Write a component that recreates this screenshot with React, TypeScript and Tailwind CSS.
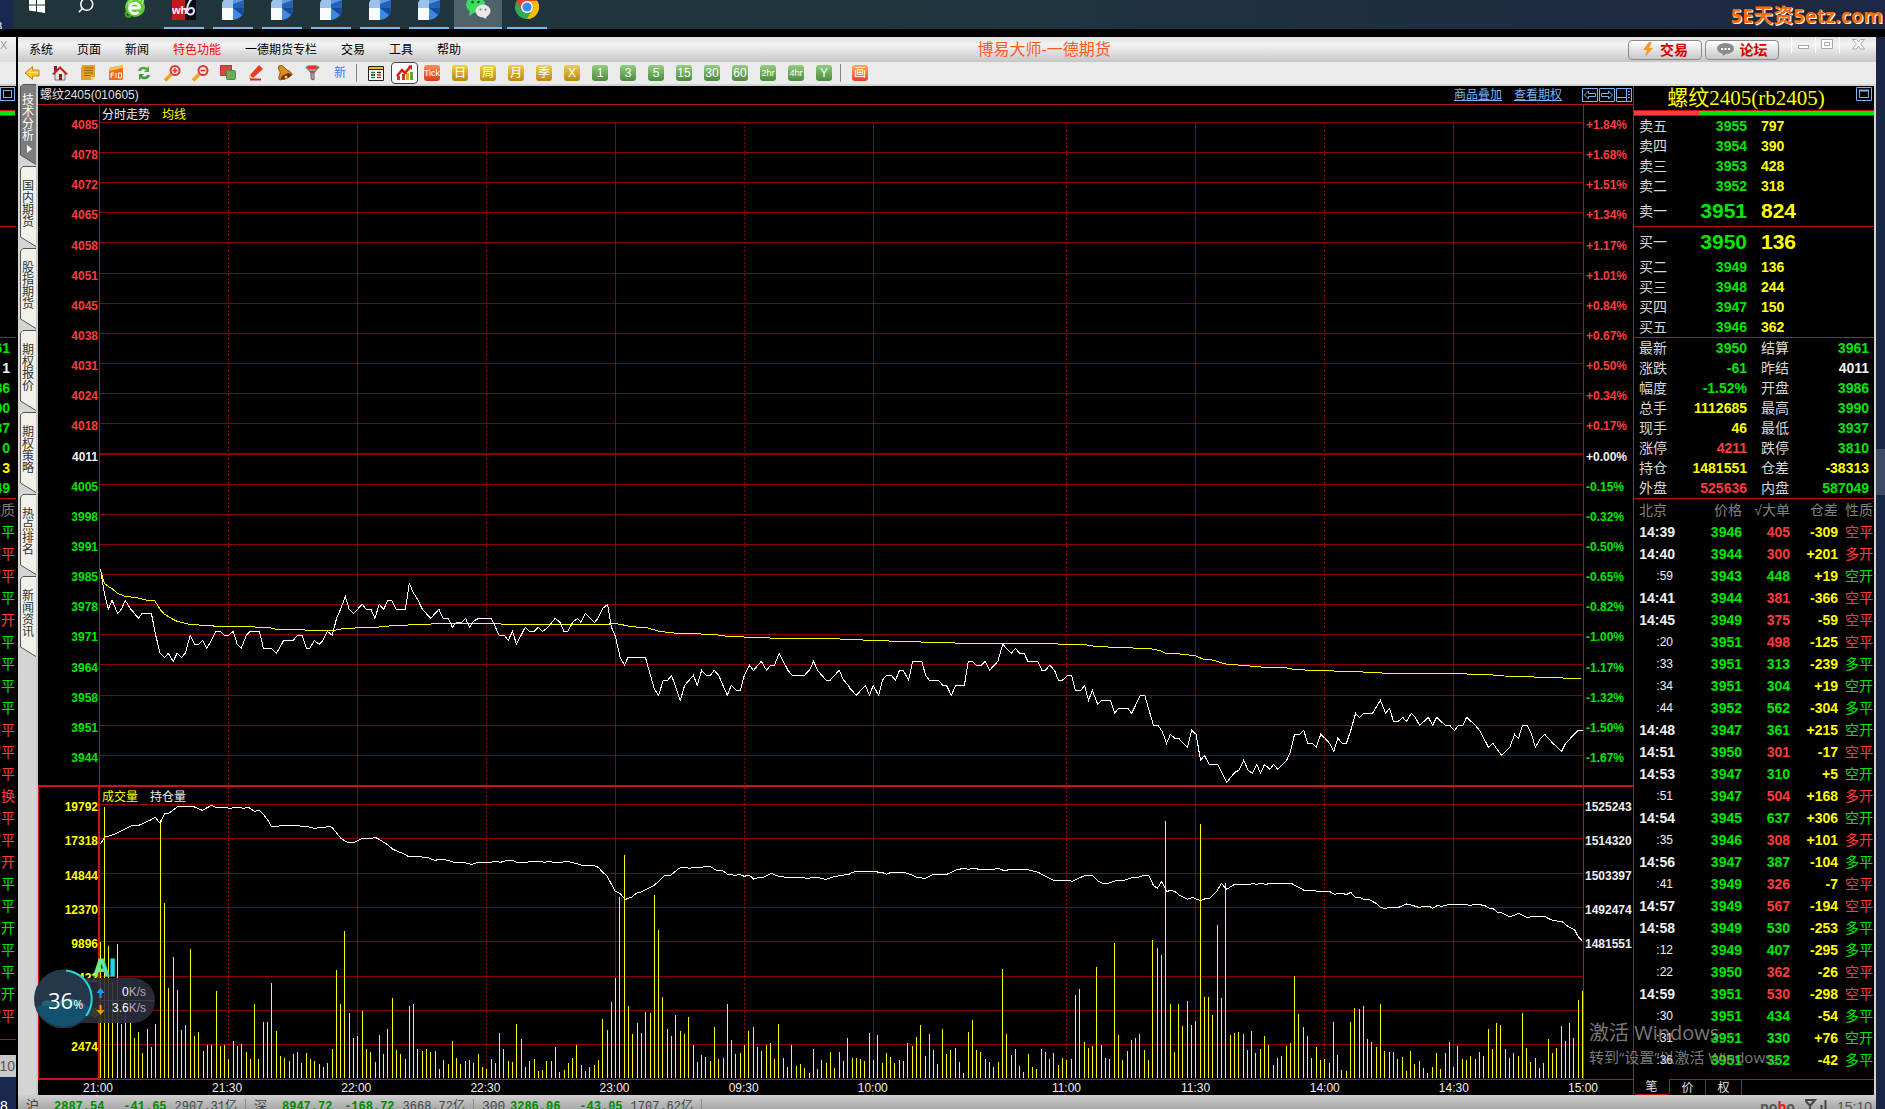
import type { ReactNode } from 'react';
import { Search } from 'lucide-react';
import clsx from 'clsx';

type Pt = [number, number];

// ── Chart geometry ──────────────────────────────────────────────────────────
// One trading minute is STEP units wide; 345 minutes from 21:00 to 15:00.
const X0 = 21;
const STEP = 8.864;
const DAY = 1568; // x where the second half of the line data starts

const TIME_TICKS = [
  { label: '21:00', minute: 0 },
  { label: '21:30', minute: 30 },
  { label: '22:00', minute: 60 },
  { label: '22:30', minute: 90 },
  { label: '23:00', minute: 120 },
  { label: '09:30', minute: 150 },
  { label: '10:00', minute: 180 },
  { label: '11:00', minute: 225 },
  { label: '11:30', minute: 255 },
  { label: '14:00', minute: 285 },
  { label: '14:30', minute: 315 },
  { label: '15:00', minute: 345 },
];
const DOTTED = [30, 90, 150, 225, 285];

const PRICE_LABELS = [
  4085, 4078, 4072, 4065, 4058, 4051, 4045, 4038, 4031, 4024, 4018,
  4011, 4005, 3998, 3991, 3985, 3978, 3971, 3964, 3958, 3951, 3944,
];
const PCT_LABELS = [
  '+1.84%', '+1.68%', '+1.51%', '+1.34%', '+1.17%', '+1.01%', '+0.84%', '+0.67%',
  '+0.50%', '+0.34%', '+0.17%', '+0.00%', '-0.15%', '-0.32%', '-0.50%', '-0.65%',
  '-0.82%', '-1.00%', '-1.17%', '-1.32%', '-1.50%', '-1.67%',
];
const VOL_LABELS = ['19792', '17318', '14844', '12370', '9896', '7422', '4948', '2474'];
const HOLD_LABELS = ['1525243', '1514320', '1503397', '1492474', '1481551', '', '', ''];

const PRICE_A: Pt[] = [[22,87],[30,160],[38,208],[46,181],[57,220],[65,208],[73,181],[83,205],[91,218],[100,235],[108,220],[127,220],[136,286],[145,340],[154,352],[162,340],[172,364],[180,340],[189,352],[197,340],[207,286],[216,313],[224,313],[233,301],[241,325],[251,301],[260,274],[269,274],[278,286],[286,286],[296,274],[304,313],[312,325],[323,286],[331,274],[350,274],[358,325],[375,325],[385,340],[400,301],[420,301],[428,286],[438,286],[447,325],[454,325],[463,301],[473,313],[481,301],[490,274],[500,286],[509,235],[518,205],[527,169],[535,208],[544,220],[562,193],[570,208],[580,208],[588,235],[597,193],[606,208],[615,181],[623,181],[632,208],[651,208],[659,130],[667,157],[676,178],[686,208],[703,235],[720,208],[729,235],[739,235],[748,262],[756,247],[767,247],[775,235],[783,262],[792,243],[802,235],[828,235],[836,259],[844,286],[855,286],[863,301],[872,274],[880,313],[898,262],[907,274],[917,274],[925,262],[934,274],[943,265],[960,235],[970,247],[978,274],[986,274],[996,247],[1006,235],[1013,247],[1022,220],[1041,247],[1048,235],[1058,205],[1068,193],[1076,262],[1084,289],[1094,352],[1103,376],[1110,352],[1146,352],[1164,445],[1173,466],[1183,421],[1192,421],[1200,406],[1218,481],[1227,436],[1245,406],[1253,436],[1262,391],[1272,406],[1280,406],[1288,391],[1297,406],[1315,466],[1323,436],[1334,451],[1342,451],[1350,406],[1361,376],[1369,391],[1385,364],[1396,391],[1404,376],[1412,376],[1422,340],[1440,391],[1449,406],[1474,406],[1484,391],[1493,364],[1501,391],[1519,421],[1527,421],[1536,406],[1546,391],[1554,418],[1568,443]];
const PRICE_B: Pt[] = [[0,265],[13,286],[32,256],[40,286],[48,256],[59,286],[67,241],[75,226],[85,226],[94,241],[102,211],[110,211],[121,241],[129,184],[148,184],[156,226],[164,241],[183,241],[191,256],[199,256],[209,286],[218,256],[236,256],[244,184],[253,184],[261,196],[271,196],[279,184],[288,211],[305,184],[315,133],[333,160],[341,145],[350,160],[359,160],[367,184],[387,184],[396,211],[403,211],[412,196],[422,211],[430,241],[438,241],[449,226],[457,226],[465,271],[476,271],[484,256],[492,301],[500,271],[511,313],[519,301],[537,301],[546,340],[554,325],[573,325],[581,340],[599,286],[608,286],[626,376],[635,376],[644,394],[653,430],[661,403],[670,415],[678,415],[696,442],[705,391],[714,403],[723,481],[731,466],[741,493],[758,493],[777,547],[794,517],[803,510],[812,481],[821,510],[830,520],[839,493],[847,520],[855,493],[866,508],[874,493],[882,508],[900,483],[908,458],[917,403],[927,403],[936,391],[944,430],[953,430],[962,442],[971,403],[980,415],[989,430],[998,454],[1006,415],[1016,430],[1024,430],[1033,391],[1043,340],[1051,352],[1060,340],[1078,340],[1094,301],[1105,340],[1113,325],[1121,364],[1131,364],[1140,352],[1148,364],[1158,340],[1166,352],[1175,376],[1193,352],[1202,376],[1210,352],[1228,376],[1237,376],[1247,391],[1255,376],[1264,376],[1272,352],[1290,376],[1300,394],[1317,442],[1326,430],[1344,466],[1361,442],[1371,403],[1379,415],[1387,376],[1397,376],[1405,400],[1414,442],[1423,418],[1433,403],[1450,430],[1468,454],[1476,430],[1502,391],[1512,391]];

const AVG_A: Pt[] = [[22,90],[30,130],[38,139],[46,146],[57,160],[73,169],[97,173],[115,180],[134,182],[145,208],[154,223],[172,238],[180,244],[205,253],[265,259],[325,260],[370,263],[385,268],[440,268],[445,271],[505,271],[525,265],[590,262],[625,257],[720,251],[845,250],[850,253],[1070,253],[1076,250],[1095,253],[1115,260],[1148,263],[1175,274],[1210,280],[1285,283],[1315,289],[1420,295],[1525,296],[1568,298]];
const AVG_B: Pt[] = [[0,118],[40,121],[100,124],[170,127],[240,130],[425,130],[430,133],[480,133],[505,139],[545,142],[620,146],[640,152],[652,160],[675,161],[712,167],[728,177],[745,179],[775,192],[825,198],[855,202],[895,202],[915,208],[950,211],[1045,215],[1110,220],[1235,221],[1310,223],[1350,228],[1410,231],[1470,234],[1508,237]];

const HOLD_A: Pt[] = [[22,178],[30,157],[50,148],[88,121],[101,121],[125,105],[135,97],[145,115],[154,87],[163,85],[180,66],[188,63],[211,63],[232,76],[251,61],[258,66],[278,66],[287,70],[305,67],[317,70],[327,67],[340,79],[350,76],[360,92],[368,107],[374,124],[388,124],[395,121],[410,123],[427,121],[438,124],[450,125],[464,130],[476,127],[485,127],[492,123],[500,128],[518,160],[530,171],[545,172],[563,160],[582,160],[588,156],[600,166],[615,180],[625,193],[650,208],[658,216],[666,214],[695,217],[712,226],[722,223],[740,226],[750,232],[770,232],[788,238],[800,232],[825,232],[837,229],[847,232],[860,226],[873,226],[880,232],[900,232],[912,229],[930,229],[938,232],[947,229],[958,233],[975,232],[980,229],[995,232],[1015,241],[1040,242],[1049,247],[1058,262],[1066,271],[1084,319],[1093,325],[1105,343],[1117,337],[1130,322],[1138,321],[1165,300],[1185,273],[1198,271],[1215,250],[1225,246],[1238,250],[1245,246],[1265,246],[1280,244],[1292,256],[1305,256],[1315,268],[1333,271],[1340,268],[1350,274],[1360,270],[1369,282],[1380,277],[1390,277],[1406,265],[1422,275],[1440,277],[1468,277],[1478,280],[1500,277],[1518,283],[1530,277],[1550,271],[1568,268]];
const HOLD_B: Pt[] = [[0,265],[12,259],[50,259],[60,262],[66,262],[75,268],[85,262],[112,262],[128,270],[138,277],[155,280],[172,268],[200,268],[220,254],[236,250],[244,253],[253,250],[268,253],[297,253],[306,250],[318,257],[332,253],[365,253],[388,262],[420,286],[452,286],[458,289],[485,271],[500,271],[512,289],[522,295],[532,295],[550,286],[565,286],[583,277],[597,276],[605,271],[616,271],[626,301],[634,310],[643,289],[653,320],[661,316],[670,319],[680,331],[696,343],[706,337],[723,347],[733,341],[742,340],[758,316],[766,295],[777,313],[793,298],[825,298],[830,295],[838,298],[848,295],[858,298],[868,295],[910,295],[937,316],[953,316],[965,319],[990,320],[999,328],[1010,325],[1025,328],[1033,322],[1042,337],[1052,337],[1060,343],[1070,343],[1085,355],[1094,367],[1104,371],[1112,367],[1132,367],[1148,357],[1160,361],[1175,368],[1182,364],[1195,364],[1202,370],[1212,361],[1220,364],[1236,358],[1265,358],[1280,361],[1292,358],[1308,361],[1320,370],[1327,371],[1335,382],[1343,382],[1355,392],[1362,395],[1380,385],[1397,398],[1410,394],[1433,394],[1445,404],[1470,411],[1480,423],[1495,435],[1502,455],[1510,467]];

// top of each one-minute volume bar, bars stand on VOL_BASE
const VOL_BASE = 879;
const VOLUME = [
  471,66,483,590,477,717,675,711,759,741,804,732,786,717,105,354,609,515,615,735,720,492,753,741,798,780,780,619,783,780,
  821,768,783,777,801,821,657,821,711,711,594,738,813,819,828,807,801,834,804,821,828,837,846,834,792,555,657,438,684,759,
  753,678,792,801,831,750,807,732,639,795,807,822,663,657,792,798,792,801,798,852,825,837,768,819,837,828,825,834,807,846,
  852,822,834,744,792,828,831,717,762,846,828,822,858,855,828,828,786,861,855,834,819,780,840,858,846,840,825,702,735,651,
  579,336,210,663,747,714,744,681,684,330,435,636,732,753,690,738,747,696,780,831,810,816,828,726,822,819,657,765,807,804,
  780,738,726,786,798,780,774,822,717,819,846,780,843,837,849,864,792,852,825,834,801,849,801,828,759,819,819,822,828,744,
  825,750,834,804,816,834,825,828,774,783,756,720,813,747,795,837,732,807,795,789,831,864,741,705,795,801,822,831,846,831,
  552,747,810,792,843,861,807,846,852,792,801,822,804,840,819,825,822,630,612,771,789,783,546,780,819,822,474,750,825,798,
  765,759,747,795,825,465,489,510,108,657,801,657,723,648,720,708,117,636,636,690,420,639,294,750,744,741,747,795,738,804,
  792,753,780,840,819,813,783,774,573,687,726,753,819,786,825,822,834,711,810,855,858,711,669,672,663,762,771,786,657,798,
  801,801,822,816,858,798,837,828,849,864,846,804,852,804,771,846,783,822,825,813,822,801,813,732,792,714,720,792,819,804,
  813,684,789,831,819,849,834,762,804,789,723,768,714,759,645,618,
];

const minuteX = (m: number) => X0 + m * STEP;
const join = (a: Pt[], b: Pt[], dy: number) =>
  [...a, ...b.map(([x, y]): Pt => [x + DAY, y + dy])].map(p => p.join(',')).join(' ');

// ── Quote panel data ────────────────────────────────────────────────────────
const ASKS = [['卖五', '3955', '797'], ['卖四', '3954', '390'], ['卖三', '3953', '428'], ['卖二', '3952', '318']];
const BIDS = [['买二', '3949', '136'], ['买三', '3948', '244'], ['买四', '3947', '150'], ['买五', '3946', '362']];

const G = 'text-[#00e600]';
const R = 'text-[#ff3c3c]';
const Y = 'text-[#ffff00]';
const W = 'text-[#f0f0f0]';

const STATS = [
  ['最新', '3950', G, '结算', '3961', G],
  ['涨跌', '-61', G, '昨结', '4011', W],
  ['幅度', '-1.52%', G, '开盘', '3986', G],
  ['总手', '1112685', Y, '最高', '3990', G],
  ['现手', '46', Y, '最低', '3937', G],
  ['涨停', '4211', R, '跌停', '3810', G],
  ['持仓', '1481551', Y, '仓差', '-38313', Y],
  ['外盘', '525636', R, '内盘', '587049', G],
];

const TRADES: [string, string, string, string, string, string][] = [
  ['14:39', '3946', '405', '-309', '空平', R],
  ['14:40', '3944', '300', '+201', '多开', R],
  [':59', '3943', '448', '+19', '空开', G],
  ['14:41', '3944', '381', '-366', '空平', R],
  ['14:45', '3949', '375', '-59', '空平', R],
  [':20', '3951', '498', '-125', '空平', R],
  [':33', '3951', '313', '-239', '多平', G],
  [':34', '3951', '304', '+19', '空开', G],
  [':44', '3952', '562', '-304', '多平', G],
  ['14:48', '3947', '361', '+215', '空开', G],
  ['14:51', '3950', '301', '-17', '空平', R],
  ['14:53', '3947', '310', '+5', '空开', G],
  [':51', '3947', '504', '+168', '多开', R],
  ['14:54', '3945', '637', '+306', '空开', G],
  [':35', '3946', '308', '+101', '多开', R],
  ['14:56', '3947', '387', '-104', '多平', G],
  [':41', '3949', '326', '-7', '空平', R],
  ['14:57', '3949', '567', '-194', '空平', R],
  ['14:58', '3949', '530', '-253', '多平', G],
  [':12', '3949', '407', '-295', '多平', G],
  [':22', '3950', '362', '-26', '空平', R],
  ['14:59', '3951', '530', '-298', '空平', R],
  [':30', '3951', '434', '-54', '多平', G],
  [':31', '3951', '330', '+76', '空开', G],
  [':36', '3951', '352', '-42', '多平', G],
];

const SIDE_TABS = ['技术分析', '国内期货', '股指期货', '期权报价', '期权策略', '热点排名', '新闻资讯'];
const MENU = ['系统', '页面', '新闻', '特色功能', '一德期货专栏', '交易', '工具', '帮助'];

export default function App() {
  return (
    <div className="flex h-screen flex-col overflow-hidden bg-black text-xs font-['Liberation_Sans','Noto_Sans_CJK_SC',sans-serif]">
      <Taskbar />
      <div className="h-2 shrink-0" />
      <div className="flex min-h-0 flex-1">
        <NeighbourWindow />
        <div className="ml-0.5 flex min-w-0 flex-1 flex-col bg-[#d4d4d4]">
          <TitleBar />
          <Toolbar />
          <div className="flex min-h-0 flex-1 pr-0.5">
            <SideTabs />
            <div className="mt-0.5 flex min-w-0 flex-1 bg-black">
              <ChartPanel />
              <QuotePanel />
            </div>
          </div>
          <StatusBar />
        </div>
        <div className="w-[9px] shrink-0 bg-[#1a2644] pt-[412px]">
          <div className="h-[46px] bg-[#3f4963]" />
        </div>
      </div>
    </div>
  );
}

// ── Desktop ─────────────────────────────────────────────────────────────────
function Taskbar() {
  return (
    <header className="relative flex h-[29px] shrink-0 overflow-hidden">
      <div className="w-[13px] shrink-0 overflow-hidden bg-[#1a2850] pt-5 text-white">
        <span className="block -ml-1 text-[11px] leading-3">8</span>
      </div>
      <div className="flex flex-1 gap-px bg-linear-to-r from-[#20353b] via-[#20343f] to-[#1d2844]">
        <TaskItem label="开始">
          <svg width="18" height="18" viewBox="0 0 18 18" className="-mt-1" fill="#fff">
            <path d="M1 3.4 8 2.4V8.5H1zM9 2.2 17 1V8.5H9zM1 9.5H8V15.6L1 14.6zM9 9.5H17V17L9 15.8z" />
          </svg>
        </TaskItem>
        <TaskItem label="搜索">
          <Search size={18} strokeWidth={2} className="-mt-1 -scale-x-100 text-white" />
        </TaskItem>
        <TaskItem label="浏览器">
          <svg width="22" height="24" viewBox="0 0 22 24" className="-mt-1">
            <circle cx="11" cy="11" r="10" fill="#5cc832" />
            <path d="M4 9A8 8 0 0 1 17 5M18 8l2-6" stroke="#b8f08c" strokeWidth="1.5" fill="none" />
            <path d="M5.5 12h11M16 12a5.2 5.2 0 1 0-1.5 4" stroke="#fff" strokeWidth="2.8" fill="none" />
            <path d="M2 16c-1 4 1 6 5 4" stroke="#43a51e" strokeWidth="2" fill="none" />
          </svg>
        </TaskItem>
        <TaskItem label="wh6" running>
          <svg width="24" height="24" viewBox="0 0 24 24" className="-mt-1">
            <rect width="13" height="24" fill="#c31a20" />
            <rect x="13" width="11" height="24" fill="#0b0b12" />
            <path d="M21 2c-4 3-6 8-6 13a3.500 3.500 0 1 0 7 0c0-4-5-4-6.500 0" stroke="#dbe6ff" strokeWidth="2" fill="none" />
            <text x="0" y="18" fontSize="11" fontWeight="700" fill="#fff">wh</text>
          </svg>
        </TaskItem>
        {[1, 2, 3, 4, 5].map(n => (
          <TaskItem key={n} label={`博易大师 ${n}`} running>
            <svg width="24" height="25" viewBox="0 0 24 25" className="-mt-1">
              <path d="M1 12V7C3 2 7 0 12 0V12z" fill="#9cc2ea" />
              <path d="M12 12V0h11v12z" fill="#2462b8" />
              <path d="M12 0h11v4L12 8z" fill="#5f9bdc" />
              <path d="M1 12h11v12H1z" fill="#f8fbff" />
              <path d="M12 12h11c0 7-4 11-11 12z" fill="#3c8be0" />
              <path d="M12 12h11c0 3-1 5-2 7z" fill="#164a9c" />
            </svg>
          </TaskItem>
        ))}
        <TaskItem label="微信" running active>
          <svg width="25" height="24" viewBox="0 0 25 24" className="-mt-1">
            <ellipse cx="9.500" cy="8.500" rx="9.500" ry="8" fill="#3ddb63" />
            <path d="M3 20l1-6 5 2z" fill="#3ddb63" />
            <circle cx="6.500" cy="6" r="1.300" fill="#15502a" />
            <circle cx="12.500" cy="6" r="1.300" fill="#15502a" />
            <ellipse cx="17" cy="15" rx="7.500" ry="6.500" fill="#e8e8e8" />
            <path d="M20 23l1-4-4 2z" fill="#e8e8e8" />
            <circle cx="14.500" cy="13.500" r="1" fill="#777" />
            <circle cx="19.500" cy="13.500" r="1" fill="#777" />
          </svg>
        </TaskItem>
        <TaskItem label="Chrome" running>
          <svg width="24" height="24" viewBox="0 0 24 24" className="-mt-1">
            <circle cx="12" cy="11" r="12" fill="#35a853" />
            <path d="M1.600 5A12 12 0 0 1 22.400 5H12a6 6 0 0 0-5.200 3z" fill="#e94235" />
            <path d="M22.400 5A12 12 0 0 1 12 23l5.200-9A6 6 0 0 0 12 5z" fill="#fbbc04" />
            <path d="M1.600 5 6.800 14A6 6 0 0 1 12 5z" fill="#e94235" />
            <circle cx="12" cy="11" r="6" fill="#fff" />
            <circle cx="12" cy="11" r="4.600" fill="#4285f4" />
          </svg>
        </TaskItem>
      </div>
      <div className="absolute top-0.5 right-0.5 text-xl leading-7 font-bold whitespace-nowrap text-[#ff6a00] [text-shadow:1px_1px_0_#fff] font-['Open_Sans','Noto_Sans_CJK_SC',sans-serif]">
        5E天资5etz.com
      </div>
    </header>
  );
}

function TaskItem({ label, running, active, children }: { label: string; running?: boolean; active?: boolean; children: ReactNode }) {
  return (
    <button
      type="button"
      aria-label={label}
      className={clsx('flex w-12 flex-col items-center justify-between', active && 'bg-[#50626a]')}
    >
      {children}
      {running && <span className={clsx('h-0.5 bg-[#76b9ed]', active ? 'w-12' : 'w-10')} />}
    </button>
  );
}

// right edge of the window that sits on the monitor to the left
function NeighbourWindow() {
  const stats = [['61', G], ['1', W], ['86', G], ['90', G], ['37', G], ['0', G], ['3', Y], ['49', G]];
  const tape = '平g 空平r 空平r 平g 开r 平g 平g 平g 平g 空平r 空平r 空平r 换r 空平r 空平r 开r 平g 平g 空开g 平g 平g 空开g 空平r'.split(' ');
  return (
    <div className="flex w-4 shrink-0 flex-col overflow-hidden bg-[#1a2850]">
      <div className="flex h-[25px] shrink-0 justify-start bg-linear-to-b from-[#f4f4f4] to-[#dcdcdc] text-[11px] leading-4 text-[#999]">X</div>
      <div className="h-[22px] shrink-0 bg-[#ebebeb]" />
      <div className="flex shrink-0 flex-col bg-black">
        <div className="h-0.5 bg-[#d0cccc]" />
        <div className="flex h-6 items-start pt-px">
          <span className="h-3.5 w-[15px] border border-[#78b4f0] p-0.5">
            <span className="block h-2 w-[9px] border border-[#78b4f0]" />
          </span>
        </div>
        <div className="h-1.5 w-[15px] border-y border-[#c81414] bg-[#00e600]" />
        <div className="h-[110px]" />
        <div className="h-px bg-[#c01414]" />
        <div className="h-[110px]" />
        <div className="h-px bg-[#c01414]" />
        {stats.map(([t, c], i) => (
          <div key={i} className={clsx('flex h-5 items-center justify-end pr-1.5 text-sm font-bold', c)}>{t}</div>
        ))}
        <div className="h-px bg-[#c01414]" />
        <div className="flex h-[22px] items-center justify-end pr-px text-sm whitespace-nowrap text-[#808080]">性质</div>
        {tape.map((t, i) => (
          <div key={i} className={clsx('flex h-[22px] items-center justify-end pr-px text-sm whitespace-nowrap', t.endsWith('r') ? R : G)}>
            {t.slice(0, -1)}
          </div>
        ))}
        <div className="mt-3 mb-[15px] h-px bg-[#c01414]" />
      </div>
      <div className="flex h-[22px] shrink-0 items-center justify-end bg-[#c8c8c8] pr-px text-sm text-[#555]">10</div>
      <div className="pt-[21px] text-sm leading-4 text-white">8</div>
    </div>
  );
}

// ── Window chrome ───────────────────────────────────────────────────────────
function TitleBar() {
  return (
    <div className="relative flex h-[25px] shrink-0 items-center bg-linear-to-b from-[#e2e2e2] via-[#f3f3f3] via-30% to-[#c6c6c6] text-black">
      <nav className="flex gap-6 pl-[11px]">
        {MENU.map(m => (
          <a key={m} href="#" className={clsx('leading-4 whitespace-nowrap', m === '特色功能' && 'text-[#ff0000]')}>{m}</a>
        ))}
      </nav>
      {/* centred between the menu and the buttons */}
      <h1 className="flex-1 pr-px text-center text-base leading-6 text-[#ff5a1e]">博易大师-一德期货</h1>
      <div className="flex items-center gap-[3px] pr-3">
        <button type="button" className="flex h-5 w-[74px] items-center justify-center gap-1.5 rounded-sm border border-[#8a8a8a] bg-linear-to-b from-white to-[#c8c8c8] text-sm font-bold text-[#d40000]">
          <svg width="12" height="15" viewBox="0 0 12 15"><path d="M7 0 1 8h4L3 15l8-9H7l3-6z" fill="#f29a1f" /></svg>
          交易
        </button>
        <button type="button" className="flex h-5 w-[74px] items-center justify-center gap-1.5 rounded-sm border border-[#8a8a8a] bg-linear-to-b from-white to-[#c8c8c8] text-sm font-bold text-[#d40000]">
          <svg width="17" height="13" viewBox="0 0 17 13">
            <ellipse cx="8.500" cy="5.500" rx="8.500" ry="5.500" fill="#8c8c8c" />
            <path d="M5 9l1 4 4-3z" fill="#8c8c8c" />
            <path d="M4 5h2v2H4zM7.500 5h2v2h-2zM11 5h2v2h-2z" fill="#fff" />
          </svg>
          论坛
        </button>
      </div>
      <div className="flex h-4 items-stretch self-start border-l border-white">
        <button type="button" aria-label="最小化" className="flex w-6 items-start justify-center border-r border-white">
          <svg width="12" height="14" viewBox="0 0 12 14"><rect x=".5" y="8.500" width="10" height="3" fill="#fff" stroke="#a8a8a8" /></svg>
        </button>
        <button type="button" aria-label="最大化" className="flex w-6 items-start justify-center border-r border-white">
          <svg width="13" height="14" viewBox="0 0 13 14"><path d="M.5 2.500h11v9H.5zM3.500 5.500h5v3h-5z" fill="#fff" stroke="#a8a8a8" /></svg>
        </button>
        <button type="button" aria-label="关闭" className="flex w-9 items-start justify-center">
          <svg width="13" height="14" viewBox="0 0 13 14"><path d="M.5 2.500h4l2 2.500 2-2.500h4L8.500 7l4 5h-4l-2-3-2 3h-4l4-5z" fill="#fff" stroke="#a8a8a8" /></svg>
        </button>
      </div>
    </div>
  );
}

const GOLD_KEYS = ['日', '周', '月', '季', 'X'];
const GREEN_KEYS = ['1', '3', '5', '15', '30', '60', '2hr', '4hr', 'Y'];

function Tool({ label, children }: { label: string; children: ReactNode }) {
  return (
    <button type="button" aria-label={label} className="flex h-[22px] w-7 shrink-0 items-center justify-center">
      {children}
    </button>
  );
}

const keyBase = 'flex h-4 w-4 items-center justify-center rounded-[3px] text-xs leading-4 text-white';

function Toolbar() {
  return (
    <div className="flex h-[22px] shrink-0 items-center bg-[#ebebeb]">
      <Tool label="后退">
        <svg width="16" height="16" viewBox="0 0 16 16"><path d="M8.500 1.500 1 8l7.500 6.500V11H15V5H8.500z" fill="#fdc52a" stroke="#c98a12" /><path d="M8 4 4 7.500h10" stroke="#ffe68a" fill="none" /></svg>
      </Tool>
      <Tool label="首页">
        <svg width="16" height="16" viewBox="0 0 16 16"><path d="M3 8v7h10V8" fill="#e9e3e0" stroke="#777" /><path d="M0 9 8 1l8 8-2 1-6-6-6 6z" fill="#c9202a" /><path d="M2 1h3v4L2 7z" fill="#8e1c20" /><path d="M7 9h3v6H7z" fill="#8e1c20" /></svg>
      </Tool>
      <Tool label="资讯">
        <svg width="16" height="16" viewBox="0 0 16 16"><path d="M2 0h13v12l-3 3H1V3z" fill="#e3a02c" /><path d="M4 3h9M4 5.500h9M4 8h9M4 10.500h6" stroke="#9a6410" /><path d="M11 15v-3h4z" fill="#fbdc8c" /></svg>
      </Tool>
      <Tool label="F10">
        <svg width="16" height="16" viewBox="0 0 16 16"><path d="M1 3 15 0v14l-1 1H1z" fill="#f06a1c" /><path d="M1 3 15 0v3L1 6z" fill="#f9c04a" /><path d="M3 13V8h3M3 10h2.500M8 8v5M10.500 8h3v5h-3z" stroke="#fff" fill="none" /></svg>
      </Tool>
      <Tool label="刷新">
        <svg width="14" height="16" viewBox="0 0 14 16"><path d="M1 6c1-5 7-5 9-3l2-2v6H7l2-2c-2-1-4-1-5 1z" fill="#4caf3c" /><path d="M13 10c-1 5-7 5-9 3l-2 2V9h5l-2 2c2 1 4 1 5-1z" fill="#3f9a30" /></svg>
      </Tool>
      <Tool label="放大">
        <svg width="17" height="17" viewBox="0 0 17 17"><path d="M1 15.500 7 9.500" stroke="#f5a21b" strokeWidth="3.500" /><circle cx="11" cy="5.500" r="4.500" fill="#ffe3df" stroke="#df3a30" strokeWidth="2" /><path d="M8.500 5.500h5M11 3v5" stroke="#df3a30" strokeWidth="1.500" /></svg>
      </Tool>
      <Tool label="缩小">
        <svg width="17" height="17" viewBox="0 0 17 17"><path d="M1 15.500 7 9.500" stroke="#f5a21b" strokeWidth="3.500" /><circle cx="11" cy="5.500" r="4.500" fill="#ffe3df" stroke="#df3a30" strokeWidth="2" /><path d="M8.500 5.500h5" stroke="#df3a30" strokeWidth="1.500" /></svg>
      </Tool>
      <Tool label="叠加">
        <svg width="17" height="16" viewBox="0 0 17 16"><rect x=".5" y=".5" width="11" height="10" fill="#d8463f" stroke="#b83a34" /><rect x="6.500" y="5.500" width="9" height="9" rx="1" fill="#68ab58" stroke="#4f8e42" /></svg>
      </Tool>
      <Tool label="画线">
        <svg width="16" height="16" viewBox="0 0 16 16"><path d="M2 10 11 0l4 4-10 9-4 1z" fill="#ea3e22" /><path d="M2 10l3 3-4 1z" fill="#f8d28a" /><path d="M2 14.500h11" stroke="#d8301c" strokeWidth="2" /></svg>
      </Tool>
      <Tool label="预警">
        <svg width="17" height="16" viewBox="0 0 17 16"><path d="M3 1c4-2 5 2 8 4 3 1 5 3 5 5L4 15c-2-1-1-3 0-6S1 4 3 1z" fill="#dd8e23" stroke="#8b4d0d" /><ellipse cx="10" cy="11.500" rx="5.500" ry="2.500" transform="rotate(-24 10 11.500)" fill="#6e340a" /><circle cx="10" cy="12" r="1.500" fill="#ffd35c" /></svg>
      </Tool>
      <Tool label="筛选">
        <svg width="15" height="16" viewBox="0 0 15 16"><path d="M1 2h13L9 8v7l-3-1V8z" fill="#a9a9a9" stroke="#666" /><ellipse cx="7.500" cy="2.500" rx="6.500" ry="2.200" fill="#e8322c" stroke="#999" /><path d="M5 6h5L7.500 9z" fill="#e8322c" /></svg>
      </Tool>
      <Tool label="新"><span className="text-xs leading-4 text-[#2a86e8]">新</span></Tool>
      <div className="h-[18px] w-2 pl-0.5"><div className="h-full w-px bg-[#888]" /></div>
      <Tool label="报价">
        <svg width="16" height="16" viewBox="0 0 16 16"><path d="M.5 1.500h15v14H.5z" fill="#fff" stroke="#222" /><path d="M1 3h14" stroke="#eec21e" strokeWidth="2" /><path d="M1 4.500h14" stroke="#222" /><path d="M3 7.500h4M3 12.500h4" stroke="#198a32" strokeWidth="1.500" /><path d="M9 7.500h4M3 10h4" stroke="#222" strokeWidth="1.500" /><path d="M9 10h4M9 12.500h4" stroke="#d22" strokeWidth="1.500" /></svg>
      </Tool>
      <Tool label="分时走势">
        <span className="flex h-[22px] w-[27px] items-center justify-center rounded border border-[#444] bg-white">
          <svg width="17" height="16" viewBox="0 0 17 16"><path d="M1 15v-4h3v4zM6 15v-6h3v6z" fill="#b8452c" /><path d="M10 15V8h3v7z" fill="#e6a72c" /><path d="M14 15V7h3v8z" fill="#5aa83e" /><path d="M1 11 6 5l3 3 6-7" stroke="#e01515" strokeWidth="2.500" fill="none" /><path d="M16 0v5l-4-4z" fill="#e01515" /></svg>
        </span>
      </Tool>
      <Tool label="Tick"><span className={clsx(keyBase, 'bg-linear-to-b from-[#ff8a50] to-[#d93a22] text-[9px]')}>Tick</span></Tool>
      {GOLD_KEYS.map(k => (
        <Tool key={k} label={k}><span className={clsx(keyBase, 'bg-linear-to-b from-[#efcf4c] to-[#b98a12]')}>{k}</span></Tool>
      ))}
      {GREEN_KEYS.map(k => (
        <Tool key={k} label={k}>
          <span className={clsx(keyBase, 'bg-linear-to-b from-[#93cf7c] to-[#4b8c3f]', k.length > 2 && 'text-[9px]')}>{k}</span>
        </Tool>
      ))}
      <div className="h-[18px] w-2 pl-0.5"><div className="h-full w-px bg-[#888]" /></div>
      <Tool label="画"><span className={clsx(keyBase, 'bg-linear-to-b from-[#ffb04a] to-[#ea3c1c]')}>画</span></Tool>
    </div>
  );
}

function SideTabs() {
  return (
    <div className="flex w-5 shrink-0 flex-col gap-px border-r-2 border-[#cbc7c7] bg-[#d4d4d4] pl-0.5">
      {SIDE_TABS.map((t, i) => (
        <button key={t} type="button" className={clsx('relative h-[81px] w-4 shrink-0', i === 0 ? 'text-white' : 'text-[#333]')}>
          <svg className="absolute inset-0" width="16" height="81" viewBox="0 0 16 81">
            <path d="M16 .5H3L.5 3V71L16 80.500" fill={i === 0 ? '#7d7d7d' : '#f1f1ea'} stroke="#555" />
          </svg>
          <span className={clsx('absolute inset-x-0 flex flex-col items-center text-xs leading-3', i === 0 ? 'top-2.5' : 'top-3.5')}>
            {t.split('').map(c => <span key={c}>{c}</span>)}
          </span>
          {i === 0 && (
            <svg className="absolute top-[61px] left-1.5" width="6" height="8" viewBox="0 0 6 8"><path d="M1 0v8l5-4z" fill="#fff" /></svg>
          )}
        </button>
      ))}
    </div>
  );
}

// ── Charts ──────────────────────────────────────────────────────────────────
function VerticalGrid({ top, bottom }: { top: number; bottom: number }) {
  return (
    <>
      {TIME_TICKS.slice(1, -1).map(({ minute }) => (
        <line
          key={minute}
          x1={minuteX(minute)} x2={minuteX(minute)} y1={top} y2={bottom}
          stroke="#8c0000"
          strokeDasharray={DOTTED.includes(minute) ? '2 2' : undefined}
          vectorEffect="non-scaling-stroke"
        />
      ))}
    </>
  );
}

function ChartPanel() {
  return (
    <section className="relative flex min-w-0 flex-1 flex-col">
      <div className="flex h-[18px] shrink-0 items-center pl-0.5 text-[#e0e0e0]">
        <span className="leading-4">螺纹2405(010605)</span>
        <div className="ml-auto flex items-center gap-3 text-[#78b4f0]">
          <a href="#" className="leading-4 underline">商品叠加</a>
          <a href="#" className="leading-4 underline">查看期权</a>
        </div>
        <div className="ml-5 flex gap-px pr-px text-[#78b4f0]">
          <button type="button" aria-label="左移">
            <svg width="16" height="14" viewBox="0 0 16 14" fill="none" stroke="currentColor"><path d="M.5.5h15v13H.5zM2.500 7 6.500 3v2.500h7v3h-7V11z" /></svg>
          </button>
          <button type="button" aria-label="右移">
            <svg width="16" height="14" viewBox="0 0 16 14" fill="none" stroke="currentColor"><path d="M.5.5h15v13H.5zM13.500 7l-4-4v2.500h-7v3h7V11z" /></svg>
          </button>
          <button type="button" aria-label="布局">
            <svg width="16" height="14" viewBox="0 0 16 14" fill="none" stroke="currentColor"><path d="M.5.5h15v13H.5zM10.500 0v14M0 9.500h10M12 3.500h2M12 6.500h2M12 9.500h2" /></svg>
          </button>
        </div>
      </div>

      {/* price */}
      <div className="flex min-h-0 flex-1 border-t border-[#c01414] font-bold">
        <div className="flex w-[61px] shrink-0 flex-col justify-between pt-3.5 pr-px pb-[21px] text-right">
          {PRICE_LABELS.map(p => (
            <span key={p} className={clsx('leading-3', p > 4011 ? R : p < 4011 ? G : W)}>{p}</span>
          ))}
        </div>
        <div className="relative min-w-0 flex-1 border-x border-[#c01414]">
          <svg className="absolute inset-0 h-full w-full" viewBox="21 -1305 3059 2040" preserveAspectRatio="none" shapeRendering="crispEdges" fill="none">
            {PRICE_LABELS.map((p, i) => (
              <line
                key={p}
                x1="20" x2="3081" y1={-1253 + i * 90.43} y2={-1253 + i * 90.43}
                stroke="#8c0000" strokeWidth={p === 4011 ? 2 : 1} vectorEffect="non-scaling-stroke"
              />
            ))}
            <VerticalGrid top={-1253} bottom={735} />
            <polyline points={join(AVG_A, AVG_B, 180)} stroke="#ffff00" vectorEffect="non-scaling-stroke" />
            <polyline points={join(PRICE_A, PRICE_B, 180)} stroke="#ffffff" vectorEffect="non-scaling-stroke" />
          </svg>
          <div className="relative flex gap-3 pt-0.5 pl-0.5 font-normal leading-4">
            <span className="text-[#f0f0f0]">分时走势</span>
            <span className="text-[#ffff00]">均线</span>
          </div>
        </div>
        <div className="flex w-[49px] shrink-0 flex-col justify-between pt-3.5 pb-[21px] pl-0.5">
          {PCT_LABELS.map((p, i) => (
            <span key={p} className={clsx('leading-3', i < 11 ? R : i > 11 ? G : W)}>{p}</span>
          ))}
        </div>
      </div>

      {/* volume / open interest */}
      <div className="flex h-[295px] shrink-0 border-t-2 border-b border-[#c81414] font-bold">
        <div className="flex w-[61px] shrink-0 flex-col justify-between border-r border-b border-l border-[#c81414] pt-3.5 pb-[25px] text-right text-[#ffff00]">
          {VOL_LABELS.map(v => <span key={v} className="leading-3">{v}</span>)}
        </div>
        <div className="relative min-w-0 flex-1 border-x border-[#c81414]">
          <svg className="absolute inset-0 h-full w-full" viewBox="21 6 3059 876" preserveAspectRatio="none" shapeRendering="crispEdges" fill="none">
            {VOL_LABELS.map((v, i) => (
              <line
                key={v}
                x1="20" x2="3081" y1={58 + i * 103} y2={58 + i * 103}
                stroke="#8c0000" vectorEffect="non-scaling-stroke"
              />
            ))}
            <VerticalGrid top={6} bottom={VOL_BASE} />
            <path
              d={VOLUME.map((v, i) => `M${minuteX(i)} ${v}V${VOL_BASE}`).join('')}
              stroke="#ffff00" vectorEffect="non-scaling-stroke"
            />
            <polyline points={join(HOLD_A, HOLD_B, 0)} stroke="#ffffff" vectorEffect="non-scaling-stroke" />
          </svg>
          <div className="relative flex gap-3 pt-0.5 pl-0.5 font-normal leading-4">
            <span className="text-[#ffff00]">成交量</span>
            <span className="text-[#f0f0f0]">持仓量</span>
          </div>
        </div>
        <div className="flex w-[49px] shrink-0 flex-col justify-between pt-3.5 pb-[26px] pl-px text-[#f0f0f0]">
          {HOLD_LABELS.map((v, i) => <span key={i} className="h-3 leading-3">{v}</span>)}
        </div>
      </div>

      {/* time axis */}
      <div className="mr-[50px] ml-[60px] h-[15px] shrink-0 text-[#f0f0f0]">
        <div className="relative h-full">
          {TIME_TICKS.map(({ label, minute }) => (
            <span key={label} className="absolute -translate-x-1/2 leading-4" style={{ left: `${(minute / 345) * 100}%` }}>{label}</span>
          ))}
        </div>
      </div>

      <NetMeter />
      <div className="pointer-events-none absolute bottom-[26px] left-full z-10 -ml-11 whitespace-nowrap text-[#9a9a9a]/80 font-['Open_Sans','Noto_Sans_CJK_SC',sans-serif]">
        <p className="text-xl leading-6">激活 Windows</p>
        <p className="text-[15px] leading-6">转到“设置”以激活 Windows。</p>
      </div>
    </section>
  );
}

// floating memory / network speed ball
function NetMeter() {
  return (
    <div className="absolute bottom-[67px] -left-1 h-[70px] w-32">
      <svg className="absolute inset-0" width="128" height="70" viewBox="0 0 128 70">
        <defs>
          <linearGradient id="ai" x1="0" x2="1">
            <stop offset="0" stopColor="#8bff5c" />
            <stop offset="1" stopColor="#19c8ff" />
          </linearGradient>
        </defs>
        <rect x="20" y="20" width="101" height="45" rx="22" fill="#2b2e3c" fillOpacity=".9" />
        <path d="M66 42.500h54" stroke="#3b3e4c" />
        <circle cx="29.500" cy="41" r="29.500" fill="#24384b" />
        <path d="M1.500 48h56A29.500 29.500 0 0 1 1.500 48z" fill="#14506f" />
        <path d="M8 45c4-5 9-2 13 0 8-5 14-6 22-3 5 1 7 3 9 6H8z" fill="#1f6272" />
        <path d="M32 12.500A28.500 28.500 0 0 1 52 58" fill="none" stroke="#23d8d8" strokeWidth="2" />
        <path d="M66.500 30l4 5h-3v5h-2v-5h-3z" fill="#17a0f5" />
        <path d="M66.500 57l4-5h-3v-5h-2v5h-3z" fill="#ff9500" />
        <text x="59" y="18" fontSize="23" fontWeight="700" fill="url(#ai)" stroke="url(#ai)">AI</text>
      </svg>
      <div className="absolute top-7 left-3.5 flex items-baseline leading-7 text-white font-['Open_Sans',sans-serif]">
        <span className="text-[22px]">36</span>
        <span className="text-xs">%</span>
      </div>
      <div className="absolute top-[26px] right-4 flex flex-col items-end text-xs leading-4 text-[#a9acb5]">
        <span><b className="font-normal text-white">0</b>K/s</span>
        <span><b className="font-normal text-white">3.6</b>K/s</span>
      </div>
    </div>
  );
}

// ── Quote panel ─────────────────────────────────────────────────────────────
function Level({ row, big }: { row: string[]; big?: boolean }) {
  const [name, price, vol] = row;
  return (
    <div className={clsx('flex items-center pl-[5px]', big ? 'h-[30px]' : 'h-5')}>
      <span className="w-10 text-sm text-[#d8d8d8]">{name}</span>
      <span className={clsx('w-[68px] text-right font-bold', big ? 'text-[21px]' : 'text-sm', G)}>{price}</span>
      <span className={clsx('pl-3.5 font-bold', big ? 'text-[21px]' : 'text-sm', Y)}>{vol}</span>
    </div>
  );
}

function QuotePanel() {
  return (
    <aside className="flex w-[241px] shrink-0 flex-col border-l border-[#c01414]">
      <div className="relative flex h-6 items-center justify-center text-[#ffff00]">
        <h2 className="pr-4 text-[21px] leading-6 font-['Liberation_Serif','Noto_Sans_CJK_SC',serif]">螺纹2405(rb2405)</h2>
        <button type="button" aria-label="展开" className="absolute top-px right-0.5 text-[#78b4f0]">
          <svg width="16" height="14" viewBox="0 0 16 14" fill="none" stroke="currentColor"><path d="M.5.5h15v13H.5zM3.500 3.500h9v7h-9z" strokeWidth="1" /><path d="M3 3.500h10" strokeWidth="2" /></svg>
        </button>
      </div>
      <div className="flex h-1.5 border-y border-[#c01414]">
        <div className="w-[27%] bg-[#ff3c3c]" />
        <div className="flex-1 bg-[#00e600]" />
      </div>

      {ASKS.map(r => <Level key={r[0]} row={r} />)}
      <Level row={['卖一', '3951', '824']} big />
      <div className="h-px bg-[#c01414]" />
      <Level row={['买一', '3950', '136']} big />
      {BIDS.map(r => <Level key={r[0]} row={r} />)}
      <div className="h-px bg-[#c01414]" />

      <table className="w-full table-fixed border-collapse text-sm leading-5">
        <tbody>
          {STATS.map(([a, av, ac, b, bv, bc]) => (
            <tr key={a} className="h-5">
              <th className="w-[45px] p-0 pl-[5px] text-left font-normal text-[#d8d8d8]">{a}</th>
              <td className={clsx('w-[68px] p-0 text-right font-bold', ac)}>{av}</td>
              <th className="w-[50px] p-0 pl-3.5 text-left font-normal text-[#d8d8d8]">{b}</th>
              <td className={clsx('p-0 pr-[5px] text-right font-bold', bc)}>{bv}</td>
            </tr>
          ))}
        </tbody>
      </table>
      <div className="h-px bg-[#c01414]" />

      <table className="w-full table-fixed border-collapse text-right text-sm leading-[22px]">
        <thead>
          <tr className="h-[22px] whitespace-nowrap text-[#808080]">
            <th className="w-[41px] p-0 pl-[5px] text-left font-normal">北京</th>
            <th className="w-[67px] p-0 font-normal">价格</th>
            <th className="w-12 p-0 font-normal">√大单</th>
            <th className="w-12 p-0 font-normal">仓差</th>
            <th className="p-0 pr-px font-normal">性质</th>
          </tr>
        </thead>
        <tbody>
          {TRADES.map(([t, p, v, d, k, c], i) => (
            <tr key={i} className="h-[22px] font-bold">
              <td className={clsx('p-0 text-[#f0f0f0]', t[0] === ':' && 'pr-0.5 text-xs font-normal')}>{t}</td>
              <td className={clsx('p-0', G)}>{p}</td>
              <td className={clsx('p-0', c)}>{v}</td>
              <td className={clsx('p-0', Y)}>{d}</td>
              <td className={clsx('p-0 pr-px font-normal', c)}>{k}</td>
            </tr>
          ))}
        </tbody>
      </table>

      <div className="mt-auto flex h-4 text-xs leading-4 text-[#e0e0e0]">
        <button type="button" className="w-9 rounded-b-sm border-r border-b border-[#c01414]">笔</button>
        <button type="button" className="w-9 border-t border-r border-[#c01414]">价</button>
        <button type="button" className="w-9 border-t border-r border-[#c01414]">权</button>
        <div className="flex-1 border-t border-[#c01414]" />
      </div>
    </aside>
  );
}

function StatusBar() {
  const groups = [
    ['沪', '2887.54', '-41.65', '2907.31亿'],
    ['深', '8947.72', '-168.72', '3668.72亿'],
    ['300', '3286.06', '-43.05', '1707.62亿'],
  ];
  return (
    <footer className="flex h-3.5 shrink-0 items-start overflow-hidden bg-linear-to-b from-[#d0d0d0] to-[#a8a8a8] pt-1 font-['Liberation_Mono','Noto_Sans_CJK_SC',monospace]">
      {groups.map(([name, idx, chg, amt]) => (
        <div key={name} className="flex w-[228px] shrink-0 border-r border-[#8a8a8a] px-2 text-[#444]">
          <span className="w-7 text-[13px] leading-4">{name}</span>
          <span className="font-bold leading-4 text-[#008a00]">{idx}</span>
          <span className="flex-1 text-right font-bold leading-4 text-[#008a00]">{chg}</span>
          <span className="pl-2 leading-4">{amt}</span>
        </div>
      ))}
      <div className="ml-auto flex gap-2.5 pr-1 text-[#555]">
        <span className="text-sm font-bold leading-4 font-['Open_Sans',sans-serif]">po<span className="text-[#e02020]">b</span>o</span>
        <svg width="22" height="14" viewBox="0 0 22 14" fill="none" stroke="#444" strokeWidth="2"><path d="M0 1h10L5 7zM5 6v8M13 14v-4M16.500 14V6M20.500 14V1" /></svg>
        <span className="text-sm leading-4 font-['Liberation_Sans',sans-serif]">15:10</span>
      </div>
    </footer>
  );
}
